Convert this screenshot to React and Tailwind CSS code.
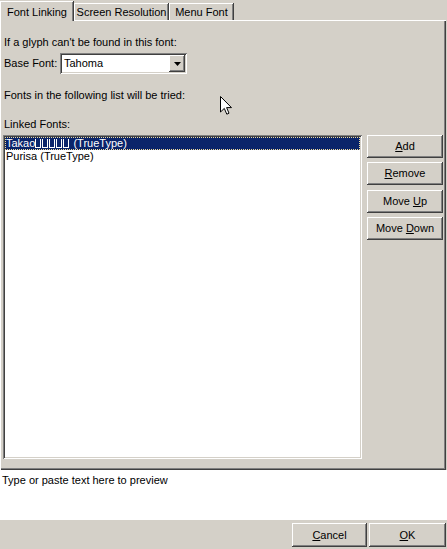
import React from 'react';

const raised =
  'shadow-[inset_-1px_-1px_#404040,inset_1px_1px_#ffffff,inset_-2px_-2px_#808080,inset_2px_2px_#d4d0c8]';
const sunken =
  'shadow-[inset_1px_1px_#808080,inset_-1px_-1px_#ffffff,inset_2px_2px_#404040,inset_-2px_-2px_#d4d0c8]';

const Btn = ({ children, className = '' }) => (
  <div className={`flex items-center justify-center bg-[#d4d0c8] ${raised} ${className}`}>
    {children}
  </div>
);

const Tofu = () => (
  <span className="inline-block w-[6px] h-[9px] border-x border-b border-white mr-[1px] align-[-1px]" />
);

export default function App() {
  return (
    <div
      className="relative w-[447px] h-[549px] bg-[#d4d0c8] flex flex-col text-[11px] leading-[13px] text-black overflow-hidden"
      style={{ fontFamily: '"Liberation Sans", Arial, sans-serif' }}
    >
      {/* Tabs */}
      <div className="h-[20px] flex items-end shrink-0">
        <div className="relative z-10 -mb-[1px] w-[73px] h-[20px] bg-[#d4d0c8] border-l border-t border-white flex justify-center pt-[4px] shadow-[inset_-1px_0_#808080,1px_0_#404040]">
          Font Linking
        </div>
        <div className="ml-[1px] w-[94px] h-[17px] border-l border-t border-white flex justify-center pt-[2px] shadow-[inset_-1px_0_#808080,1px_0_#404040]">
          Screen Resolution
        </div>
        <div className="ml-[1px] w-[64px] h-[17px] border-l border-t border-white flex justify-center pt-[2px] shadow-[inset_-1px_0_#808080,1px_0_#404040]">
          Menu Font
        </div>
      </div>

      {/* Panel */}
      <div className="w-[446px] h-[450px] shrink-0 pl-[3px] pt-[16px] flex flex-col shadow-[inset_1px_1px_#ffffff,inset_-1px_-1px_#404040,inset_-2px_-2px_#808080]">
        <div className="pl-[1px]">If a glyph can't be found in this font:</div>

        <div className="mt-[4px] h-[21px] flex items-center">
          <div className="w-[57px] pl-[1px]">Base Font:</div>
          <div className={`w-[127px] h-[21px] bg-white ${sunken} flex items-center p-[2px]`}>
            <div className="flex-1 pl-[2px]">Tahoma</div>
            <Btn className="w-[16px] h-[17px]">
              <svg width="7" height="4" viewBox="0 0 7 4">
                <path d="M0 0H7L3.5 4Z" fill="#000" />
              </svg>
            </Btn>
          </div>
        </div>

        <div className="mt-[15px] pl-[1px]">Fonts in the following list will be tried:</div>
        <div className="mt-[16px] pl-[1px]">Linked Fonts:</div>

        <div className="mt-[4px] flex">
          <div className={`w-[359px] h-[324px] bg-white ${sunken} p-[2px]`}>
            <div className="h-[13px] bg-[#0a246a] text-white border border-dotted border-[#f0dc9c] leading-[11px] whitespace-nowrap">
              Takao<Tofu /><Tofu /><Tofu /><Tofu /><Tofu /> (TrueType)
            </div>
            <div className="h-[13px] pl-[1px]">Purisa (TrueType)</div>
          </div>

          <div className="ml-[5px] w-[76px] flex flex-col">
            <Btn className="h-[23px]"><span><u>A</u>dd</span></Btn>
            <Btn className="h-[23px] mt-[4px]"><span><u>R</u>emove</span></Btn>
            <Btn className="h-[23px] mt-[5px]"><span>Move <u>U</u>p</span></Btn>
            <Btn className="h-[23px] mt-[4px]"><span>Move <u>D</u>own</span></Btn>
          </div>
        </div>
      </div>

      {/* Preview */}
      <div className="h-[50px] shrink-0 bg-white pl-[2px] pt-[4px]">Type or paste text here to preview</div>

      {/* Footer */}
      <div className="flex-1 flex justify-end items-start pt-[3px] gap-[2px] pr-[1px]">
        <Btn className="w-[75px] h-[24px]"><span><u>C</u>ancel</span></Btn>
        <Btn className="w-[77px] h-[24px]"><span><u>O</u>K</span></Btn>
      </div>

      {/* Mouse pointer */}
      <svg className="absolute left-[220px] top-[96px]" width="12" height="19" viewBox="0 0 12 19">
        <path d="M0.5 0.5V16L4.3 12.4L6.8 18.2L9 17.2L6.6 11.6H11.5Z" fill="#fff" stroke="#000" strokeWidth="1" />
      </svg>
    </div>
  );
}
